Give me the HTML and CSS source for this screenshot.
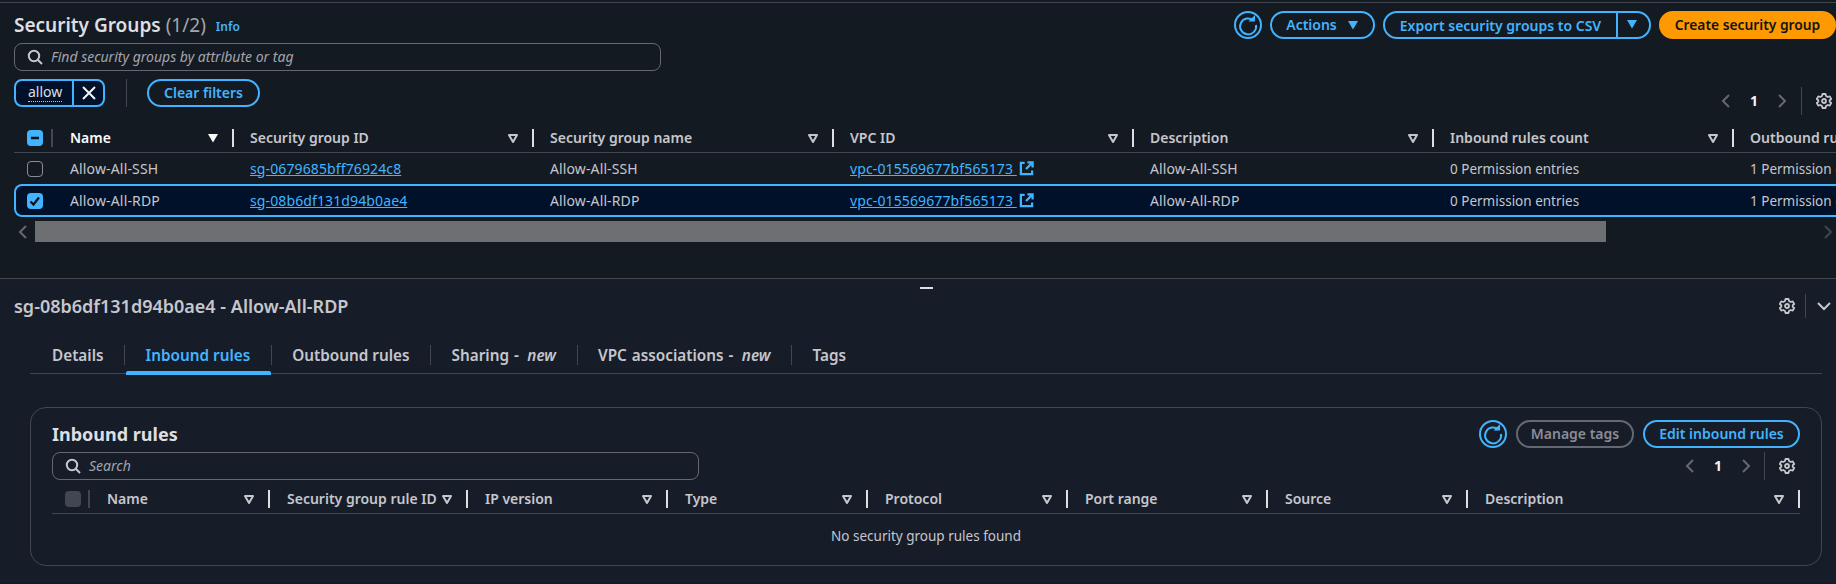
FILE: index.html
```html
<!DOCTYPE html>
<html lang="en">
<head>
    <meta charset="UTF-8">
    <meta name="viewport" content="width=device-width, initial-scale=1.0">
    <title>Security Groups</title>
    <link rel="stylesheet" href="styles.css">
</head>
<body>
    <svg class="defs" width="0" height="0" aria-hidden="true">
        <symbol id="i-gear" viewBox="0 0 16 16">
            <path d="M6.500 1h3l.5 2 1.700 1 2-.6 1.500 2.600-1.500 1.300v1.400l1.500 1.300-1.500 2.600-2-.6-1.700 1-.5 2h-3l-.5-2-1.700-1-2 .6L.8 10l1.500-1.300V7.300L.8 6l1.500-2.600 2 .6 1.700-1z" fill="none" stroke="currentColor" stroke-width="1.800" stroke-linejoin="round"/>
            <circle cx="8" cy="8" r="2" fill="none" stroke="currentColor" stroke-width="1.800"/>
        </symbol>
        <symbol id="i-refresh" viewBox="0 0 28 28">
            <circle cx="14" cy="14" r="13" fill="none" stroke="currentColor" stroke-width="2"/>
            <path d="M19.500 9.500A8 8 0 1 0 22 14" fill="none" stroke="currentColor" stroke-width="2"/>
            <path d="M14.500 10.500h6.500V4z" fill="currentColor"/>
        </symbol>
        <symbol id="i-search" viewBox="0 0 16 16">
            <circle cx="7" cy="7" r="5.200" fill="none" stroke="currentColor" stroke-width="2"/>
            <path d="M11 11l4 4" stroke="currentColor" stroke-width="2"/>
        </symbol>
        <symbol id="i-sort" viewBox="0 0 12 12">
            <path d="M2 3h8L6 10z" fill="none" stroke="currentColor" stroke-width="2" stroke-linejoin="round"/>
        </symbol>
        <symbol id="i-down" viewBox="0 0 12 12">
            <path d="M1 2h10L6 10.500z" fill="currentColor"/>
        </symbol>
        <symbol id="i-left" viewBox="0 0 12 16">
            <path d="M9 2L3 8l6 6" fill="none" stroke="currentColor" stroke-width="2"/>
        </symbol>
        <symbol id="i-right" viewBox="0 0 12 16">
            <path d="M3 2l6 6-6 6" fill="none" stroke="currentColor" stroke-width="2"/>
        </symbol>
        <symbol id="i-external" viewBox="0 0 16 16">
            <path d="M6 2H2v12h12v-4" fill="none" stroke="currentColor" stroke-width="2.400"/>
            <path d="M9 1.500h5.500V7M14 2L7.500 8.500" fill="none" stroke="currentColor" stroke-width="2.400"/>
        </symbol>
    </svg>

    <section class="list-panel">
        <div class="title-row">
            <h1>Security Groups <span class="count">(1/2)</span></h1>
            <a class="info" href="#">Info</a>
            <div class="actions">
                <button class="icon-btn"><svg class="refresh"><use href="#i-refresh"/></svg></button>
                <button class="btn btn-actions">Actions <svg class="caret"><use href="#i-down"/></svg></button>
                <div class="split">
                    <button class="split-main">Export security groups to CSV</button>
                    <button class="split-caret"><svg class="caret"><use href="#i-down"/></svg></button>
                </div>
                <button class="btn btn-primary">Create security group</button>
            </div>
        </div>

        <div class="search">
            <svg class="search-icon"><use href="#i-search"/></svg>
            <span>Find security groups by attribute or tag</span>
        </div>

        <div class="filter-row">
            <div class="chip">
                <span class="chip-text"><span>allow</span></span>
                <span class="chip-close">
                    <svg viewBox="0 0 16 16" width="16" height="16"><path d="M2 2l12 12M14 2L2 14" stroke="currentColor" stroke-width="2"/></svg>
                </span>
            </div>
            <span class="filter-divider"></span>
            <button class="btn btn-clear">Clear filters</button>
            <div class="pager pager-main">
                <svg class="pager-arrow"><use href="#i-left"/></svg>
                <span class="pager-num">1</span>
                <svg class="pager-arrow"><use href="#i-right"/></svg>
                <span class="pager-sep"></span>
                <svg class="gear"><use href="#i-gear"/></svg>
            </div>
        </div>

        <div class="sg-table">
            <div class="sg-row sg-head">
                <div class="check-cell"><span class="checkbox checked"><svg viewBox="0 0 16 16" width="16" height="16"><path d="M4 8h8" stroke="#0f141a" stroke-width="2.500"/></svg></span></div>
                <div class="th th-sorted"><span>Name</span><svg class="sort"><use href="#i-down"/></svg></div>
                <div class="th"><span>Security group ID</span><svg class="sort"><use href="#i-sort"/></svg></div>
                <div class="th"><span>Security group name</span><svg class="sort"><use href="#i-sort"/></svg></div>
                <div class="th"><span>VPC ID</span><svg class="sort"><use href="#i-sort"/></svg></div>
                <div class="th"><span>Description</span><svg class="sort"><use href="#i-sort"/></svg></div>
                <div class="th"><span>Inbound rules count</span><svg class="sort"><use href="#i-sort"/></svg></div>
                <div class="th"><span>Outbound rules count</span><svg class="sort"><use href="#i-sort"/></svg></div>
            </div>
            <div class="sg-row sg-item">
                <div class="check-cell"><span class="checkbox"></span></div>
                <div class="td td-name">Allow-All-SSH</div>
                <div class="td td-wide"><a href="#">sg-0679685bff76924c8</a></div>
                <div class="td td-wide">Allow-All-SSH</div>
                <div class="td td-wide"><a href="#">vpc-015569677bf565173 </a><svg class="external"><use href="#i-external"/></svg></div>
                <div class="td td-wide">Allow-All-SSH</div>
                <div class="td td-count">0 Permission entries</div>
                <div class="td td-count">1 Permission entry</div>
            </div>
            <div class="sg-row sg-item selected">
                <div class="check-cell"><span class="checkbox checked"><svg viewBox="0 0 16 16" width="16" height="16"><path d="M3.500 8.500l3 3 5.500-7" fill="none" stroke="#0f141a" stroke-width="2.200"/></svg></span></div>
                <div class="td td-name">Allow-All-RDP</div>
                <div class="td td-wide"><a href="#">sg-08b6df131d94b0ae4</a></div>
                <div class="td td-wide">Allow-All-RDP</div>
                <div class="td td-wide"><a href="#">vpc-015569677bf565173 </a><svg class="external"><use href="#i-external"/></svg></div>
                <div class="td td-wide">Allow-All-RDP</div>
                <div class="td td-count">0 Permission entries</div>
                <div class="td td-count">1 Permission entry</div>
            </div>
        </div>

        <div class="scrollbar">
            <svg class="scroll-arrow"><use href="#i-left"/></svg>
            <div class="scroll-track"><div class="scroll-thumb"></div></div>
            <svg class="scroll-arrow"><use href="#i-right"/></svg>
        </div>
    </section>

    <section class="detail-panel">
        <div class="drag-handle"></div>
        <div class="detail-head">
            <h2>sg-08b6df131d94b0ae4 - Allow-All-RDP</h2>
            <div class="detail-tools">
                <svg class="gear"><use href="#i-gear"/></svg>
                <span class="pager-sep"></span>
                <svg class="chevron" viewBox="0 0 16 16"><path d="M2 5l6 6 6-6" fill="none" stroke="currentColor" stroke-width="2"/></svg>
            </div>
        </div>

        <nav class="tabs">
            <a class="tab" href="#">Details</a>
            <a class="tab active" href="#">Inbound rules</a>
            <a class="tab" href="#">Outbound rules</a>
            <a class="tab tab-new" href="#">Sharing - <em>new</em></a>
            <a class="tab tab-new" href="#">VPC associations - <em>new</em></a>
            <a class="tab" href="#">Tags</a>
        </nav>

        <div class="rules-card">
            <div class="rules-top">
                <div class="rules-left">
                    <h3>Inbound rules</h3>
                    <div class="search search-small">
                        <svg class="search-icon"><use href="#i-search"/></svg>
                        <span>Search</span>
                    </div>
                </div>
                <div class="rules-right">
                    <div class="rules-actions">
                        <button class="icon-btn"><svg class="refresh"><use href="#i-refresh"/></svg></button>
                        <button class="btn btn-disabled">Manage tags</button>
                        <button class="btn btn-edit">Edit inbound rules</button>
                    </div>
                    <div class="pager pager-small">
                        <svg class="pager-arrow"><use href="#i-left"/></svg>
                        <span class="pager-num">1</span>
                        <svg class="pager-arrow"><use href="#i-right"/></svg>
                        <span class="pager-sep"></span>
                        <svg class="gear"><use href="#i-gear"/></svg>
                    </div>
                </div>
            </div>

            <div class="rules-head">
                <div class="check-cell"><span class="checkbox disabled"></span></div>
                <div class="th"><span>Name</span><svg class="sort"><use href="#i-sort"/></svg></div>
                <div class="th"><span>Security group rule ID</span><svg class="sort"><use href="#i-sort"/></svg></div>
                <div class="th"><span>IP version</span><svg class="sort"><use href="#i-sort"/></svg></div>
                <div class="th"><span>Type</span><svg class="sort"><use href="#i-sort"/></svg></div>
                <div class="th"><span>Protocol</span><svg class="sort"><use href="#i-sort"/></svg></div>
                <div class="th"><span>Port range</span><svg class="sort"><use href="#i-sort"/></svg></div>
                <div class="th"><span>Source</span><svg class="sort"><use href="#i-sort"/></svg></div>
                <div class="th"><span>Description</span><svg class="sort"><use href="#i-sort"/></svg></div>
            </div>
            <p class="empty">No security group rules found</p>
        </div>
    </section>
</body>
</html>
```

FILE: styles.css
```css
* {
    margin: 0;
    padding: 0;
    box-sizing: border-box;
}
html, body {
    height: 584px;
    overflow: hidden;
}
body {
    font-family: "Noto Sans", "Open Sans", Arial, sans-serif;
    font-size: 14px;
    line-height: 20px;
    background-color: #141a22;
    color: #c6c6cd;
    padding-top: 2px;
}
a {
    color: #42b4ff;
}
button {
    font-family: inherit;
    background: none;
    cursor: pointer;
}
.defs {
    position: absolute;
}

/* top panel */
.list-panel {
    height: 277px;
    border-top: 1px solid #424650;
    border-bottom: 1px solid #424650;
    padding: 8px 0 0 14px;
}
.title-row {
    display: flex;
    align-items: center;
    height: 28px;
}
h1 {
    font-size: 19px;
    line-height: 28px;
    font-weight: 600;
    color: #dedee3;
}
.count {
    font-weight: 400;
    color: #a4a4ad;
}
.info {
    margin-left: 10px;
    margin-top: 3px;
    font-size: 12px;
    font-weight: 600;
    text-decoration: none;
}
.actions {
    margin-left: auto;
    display: flex;
    gap: 8px;
}
.icon-btn {
    border: none;
    color: #42b4ff;
    display: flex;
}
.refresh {
    width: 28px;
    height: 28px;
}
.btn {
    height: 28px;
    border: 2px solid #42b4ff;
    border-radius: 14px;
    color: #42b4ff;
    font-size: 14px;
    font-weight: 600;
    line-height: 20px;
    display: flex;
    align-items: center;
    justify-content: center;
}
.btn-actions {
    width: 105px;
    gap: 10px;
}
.caret {
    width: 12px;
    height: 12px;
}
.split {
    width: 268px;
    height: 28px;
    display: flex;
    border: 2px solid #42b4ff;
    border-radius: 14px;
    color: #42b4ff;
}
.split-main {
    width: 233px;
    border: none;
    border-right: 2px solid #42b4ff;
    color: #42b4ff;
    font-size: 14px;
    font-weight: 600;
}
.split-caret {
    flex: 1;
    border: none;
    color: #42b4ff;
    padding-right: 4px;
}
.btn-primary {
    width: 177px;
    background-color: #ff9900;
    border-color: #ff9900;
    color: #0f141a;
    font-size: 13.800px;
}

/* search inputs */
.search {
    width: 647px;
    height: 28px;
    margin-top: 4px;
    border: 1px solid #656871;
    border-radius: 8px;
    display: flex;
    align-items: center;
    gap: 8px;
    padding-left: 12px;
    font-style: italic;
    color: #a4a4ad;
}
.search-icon {
    width: 16px;
    height: 16px;
    color: #c6c6cd;
}

/* filter chip row */
.filter-row {
    display: flex;
    height: 36px;
    margin-top: 8px;
}
.chip {
    width: 91px;
    height: 28px;
    display: flex;
    border: 2px solid #42b4ff;
    border-radius: 8px;
    background-color: #001129;
    overflow: hidden;
}
.chip-text {
    flex: 1;
    padding-left: 12px;
    border-right: 2px solid #42b4ff;
    color: #dedee3;
}
.chip-text span {
    border-bottom: 1px dotted #c6c6cd;
    line-height: 18px;
    display: inline-block;
    margin-top: 2px;
}
.chip-close {
    width: 29px;
    display: flex;
    align-items: center;
    justify-content: center;
    color: #f3f3f7;
}
.filter-divider {
    width: 1px;
    height: 28px;
    margin-left: 21px;
    background-color: #424650;
}
.btn-clear {
    width: 113px;
    margin-left: 20px;
}
.pager {
    margin-left: auto;
    align-self: flex-end;
    display: flex;
    align-items: center;
    height: 28px;
    color: #656871;
}
.pager-main {
    padding-right: 4px;
}
.pager-arrow {
    width: 12px;
    height: 16px;
}
.pager-num {
    width: 44px;
    text-align: center;
    font-weight: 700;
    color: #f3f3f7;
}
.pager-sep {
    width: 1px;
    height: 28px;
    margin: 0 14px 0 13px;
    background-color: #424650;
}
.gear {
    width: 16px;
    height: 16px;
    color: #c6c6cd;
}

/* security groups table */
.sg-table {
    margin-top: 9px;
    overflow: hidden;
}
.sg-row {
    display: grid;
    grid-template-columns: 39px 181px repeat(6, 300px);
    width: 1860px;
}
.sg-head {
    height: 29px;
    align-items: center;
    border-bottom: 1px solid #424650;
}
.sg-item {
    height: 31px;
    align-items: center;
}
.sg-item.selected {
    height: 33px;
    background-color: #001129;
    box-shadow: inset 0 0 0 2px #42b4ff;
    border-radius: 8px;
}
.check-cell {
    display: flex;
    align-items: center;
    height: 18px;
    padding-left: 13px;
    border-right: 2px solid #424650;
}
.sg-item .check-cell {
    border-right: none;
}
.checkbox {
    width: 16px;
    height: 16px;
    border: 1px solid #8c8c94;
    border-radius: 4px;
    display: block;
}
.checkbox.checked {
    background-color: #42b4ff;
    border: none;
}
.checkbox.checked svg {
    display: block;
}
.checkbox.disabled {
    background-color: #424650;
    border: none;
}
.th {
    height: 18px;
    display: flex;
    align-items: center;
    justify-content: space-between;
    padding: 0 13px 0 16px;
    border-right: 2px solid #dedee3;
    font-weight: 600;
    color: #c6c6cd;
    white-space: nowrap;
}
.th-sorted {
    color: #fbfbfb;
    padding-left: 17px;
}
.sort {
    width: 12px;
    height: 12px;
    flex-shrink: 0;
}
.td {
    padding-left: 16px;
    white-space: nowrap;
    display: flex;
    align-items: center;
}
.td-name {
    padding-left: 17px;
    letter-spacing: 0.15px;
}
.td-wide {
    letter-spacing: 0.12px;
}
.td-count {
    font-size: 13.500px;
}
.td a {
    white-space: pre;
}
.external {
    width: 15px;
    height: 15px;
    color: #42b4ff;
    margin-left: 2px;
}

/* fake scrollbar */
.scrollbar {
    display: flex;
    align-items: center;
    height: 21px;
    margin-top: 4px;
    margin-left: -14px;
    color: #424650;
}
.scroll-arrow {
    width: 12px;
    height: 16px;
    flex-shrink: 0;
}
.scrollbar .scroll-arrow:first-child {
    margin-left: 17px;
    margin-right: 6px;
    color: #656871;
}
.scrollbar .scroll-arrow:last-child {
    margin-left: 2px;
    margin-right: 2px;
}
.scroll-track {
    flex: 1;
    height: 21px;
}
.scroll-thumb {
    width: 1571px;
    height: 21px;
    background-color: #6e6f73;
}

/* bottom panel */
.detail-panel {
    position: relative;
    height: 304px;
    background-color: #161d28;
    padding: 0 14px;
}
.drag-handle {
    position: absolute;
    left: 920px;
    top: 8px;
    width: 13px;
    height: 2px;
    background-color: #dedee3;
}
.detail-head {
    display: flex;
    align-items: center;
    justify-content: space-between;
    padding-top: 14px;
    height: 40px;
}
h2 {
    font-size: 18px;
    line-height: 24px;
    font-weight: 600;
    color: #c6c6cd;
}
.detail-tools {
    display: flex;
    align-items: center;
    color: #c6c6cd;
    margin-right: -10px;
}
.detail-tools .pager-sep {
    height: 24px;
    margin: 0 10px;
}
.chevron {
    width: 16px;
    height: 16px;
}
.tabs {
    display: flex;
    margin: 20px 0 0 16px;
    width: 1792px;
    height: 35px;
    border-bottom: 1px solid #424650;
    align-items: flex-start;
}
.tab {
    position: relative;
    height: 20px;
    margin-top: 6px;
    padding: 0 20.500px;
    border-right: 1px solid #424650;
    color: #c6c6cd;
    font-size: 15.300px;
    font-weight: 600;
    text-decoration: none;
    white-space: nowrap;
}
.tab:first-child {
    padding-left: 22px;
}
.tab:last-child {
    border-right: none;
}
.tab-new {
    word-spacing: 1px;
}
.tab em {
    font-style: italic;
    margin-left: 3.500px;
}
.tab.active {
    color: #42b4ff;
}
.tab.active::after {
    content: "";
    position: absolute;
    left: 1px;
    right: 0;
    bottom: -10px;
    height: 4px;
    background-color: #42b4ff;
    border-radius: 2px 2px 0 0;
}

/* inbound rules card */
.rules-card {
    width: 1792px;
    height: 159px;
    margin: 33px 0 0 16px;
    border: 1px solid #424650;
    border-radius: 16px;
    padding: 12px 21px 0;
}
.rules-top {
    display: flex;
    justify-content: space-between;
    height: 60px;
}
h3 {
    font-size: 18px;
    line-height: 28px;
    font-weight: 700;
    color: #dedee3;
}
.rules-right {
    display: flex;
    flex-direction: column;
    align-items: flex-end;
}
.rules-actions {
    display: flex;
    gap: 9px;
}
.btn-disabled {
    width: 118px;
    border-color: #656871;
    color: #8c8c94;
}
.btn-edit {
    width: 157px;
}
.search-small {
    margin-top: 4px;
}
.pager-small {
    margin: 4px 5px 0 0;
    padding-right: 0;
}
.pager-small .pager-sep {
    margin: 0 14px 0 12px;
}
.rules-head {
    display: grid;
    grid-template-columns: 38px 180px 198px 200px 200px 200px 200px 200px 332px;
    width: 1748px;
    height: 29px;
    margin-top: 5px;
    align-items: center;
    border-bottom: 1px solid #424650;
}
.rules-head .check-cell {
    padding-left: 13px;
}
.rules-head .th {
    padding-left: 17px;
}
.empty {
    margin-top: 12px;
    text-align: center;
    font-size: 13.500px;
    color: #c6c6cd;
}
```
